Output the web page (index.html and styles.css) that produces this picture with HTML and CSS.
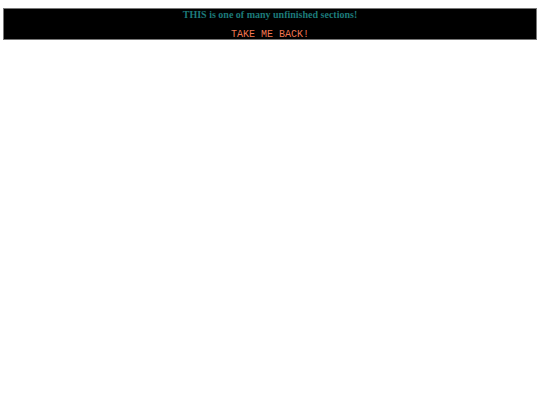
FILE: index.html
```html
<!DOCTYPE html>
<html lang="en">

<head>
    <meta charset="UTF-8">
    <meta name="viewport" content="width=device-width, initial-scale=1.0">
    <title>Unfinished</title>
    <link rel="stylesheet" href="styles.css">
</head>

<body>

    <div class="notice">
        <p class="title">THIS is one of many unfinished sections!</p>
        <a href="#" class="back">TAKE ME BACK!</a>
    </div>

</body>

</html>
```

FILE: styles.css
```css
body {
    margin: 8px 3px;
    background-color: #ffffff;
}

.notice {
    display: flex;
    flex-direction: column;
    align-items: center;
    background-color: #000000;
    border: 1px solid #777777;
    height: 30px;
}

.title {
    margin: 0;
    font-family: "Liberation Serif", serif;
    font-weight: bold;
    font-size: 10px;
    color: #1c7a7a;
}

.back {
    margin-top: 9px;
    font-family: "Liberation Mono", monospace;
    font-size: 10px;
    color: #ef7550;
    text-decoration: none;
}
```
